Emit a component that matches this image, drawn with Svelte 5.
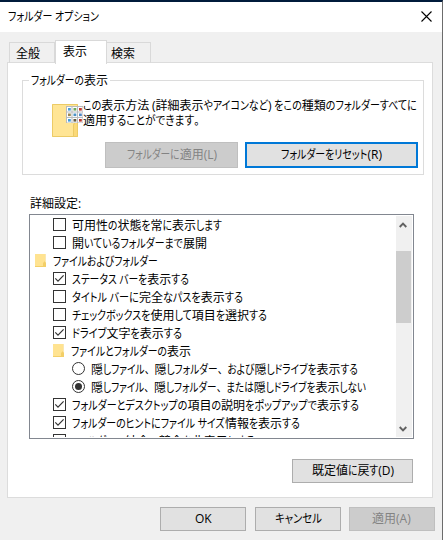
<script lang="ts">
  type Row = {
    kind: 'check' | 'radio' | 'folder';
    level: number;
    text: string;
    width: number;
    on?: boolean;
  };

  const tabs = [
    { text: '全般', width: 24 },
    { text: '表示', width: 24, active: true },
    { text: '検索', width: 24 },
  ];

  let rows: Row[] = $state([
    { kind: 'check', level: 1, text: '可用性の状態を常に表示します', width: 150 },
    { kind: 'check', level: 1, text: '開いているフォルダーまで展開', width: 135 },
    { kind: 'folder', level: 0, text: 'ファイルおよびフォルダー', width: 105 },
    { kind: 'check', level: 1, text: 'ステータス バーを表示する', width: 117, on: true },
    { kind: 'check', level: 1, text: 'タイトル バーに完全なパスを表示する', width: 171 },
    { kind: 'check', level: 1, text: 'チェックボックスを使用して項目を選択する', width: 195 },
    { kind: 'check', level: 1, text: 'ドライブ文字を表示する', width: 110, on: true },
    { kind: 'folder', level: 1, text: 'ファイルとフォルダーの表示', width: 120 },
    { kind: 'radio', level: 2, text: '隠しファイル、隠しフォルダー、および隠しドライブを表示する', width: 267 },
    { kind: 'radio', level: 2, text: '隠しファイル、隠しフォルダー、または隠しドライブを表示しない', width: 275, on: true },
    { kind: 'check', level: 1, text: 'フォルダーとデスクトップの項目の説明をポップアップで表示する', width: 287, on: true },
    { kind: 'check', level: 1, text: 'フォルダーのヒントにファイル サイズ情報を表示する', width: 228, on: true },
    { kind: 'check', level: 1, text: 'フォルダーの結合の競合を非表示にする', width: 183, on: true },
  ]);

  function toggle(row: Row) {
    if (row.kind === 'check') row.on = !row.on;
    if (row.kind === 'radio') {
      for (const r of rows) if (r.kind === 'radio') r.on = r === row;
    }
  }

  // kanji and latin keep their full width, kana and punctuation share what is left
  const split = (text: string) =>
    text.match(/[\u4e00-\u9fff]+|[!-~]+|[、。]|[^\u4e00-\u9fff!-~、。]+/g) ?? [];

  function fit(node: SVGSVGElement, width: number) {
    const runs = [...node.querySelectorAll('text')];
    const lengths = runs.map((r) => r.getComputedTextLength());
    const fixed = runs.map((r) => /[\u4e00-\u9fff!-~]/.test(r.textContent ?? ''));
    const sum = (keep: boolean) => lengths.reduce((t, l, i) => (fixed[i] === keep ? t + l : t), 0);
    const scale = (width - sum(true)) / (sum(false) || 1);
    let x = 0;
    runs.forEach((run, i) => {
      const s = fixed[i] ? 1 : scale;
      run.setAttribute('transform', `translate(${x} 0) scale(${s} 1)`);
      x += lengths[i] * s;
    });
  }
</script>

{#snippet label(text: string, width: number)}
  <svg class="label" {width} height="16" use:fit={width}>
    {#each split(text) as run}<text y="12" class:stop={/[、。]/.test(run)}>{run}</text>{/each}
  </svg>
{/snippet}

<div class="window">
  <header class="titlebar">
    {@render label('フォルダー オプション', 91)}
    <svg class="close" width="11" height="11" viewBox="0 0 11 11">
      <path d="M.5 .5l10 10M10.5 .5l-10 10" />
    </svg>
  </header>

  <nav class="tabs">
    {#each tabs as tab}
      <div class="tab" class:active={tab.active}>{@render label(tab.text, tab.width)}</div>
    {/each}
  </nav>

  <main class="page">
    <section class="group">
      <div class="legend">{@render label('フォルダーの表示', 77)}</div>
      <div class="info">
        <svg class="views" width="31" height="33" viewBox="0 0 31 33">
          <path fill="#ffe595" d="M0 0h26v33H0z" />
          <path fill="#fbd978" d="M22 19l4-2v16h-5V20z" />
          <path fill="none" stroke="#eccb66" d="M.5 .5h25v32H.5zM21.5 32V21l1-2" />
          <path fill="#b9bbbd" d="M14 2h17v17H14z" />
          {#each [0, 1, 2] as r}
            {#each [0, 1, 2] as c}
              <rect x={15 + c * 5.5} y={3 + r * 5.5} width="4.5" height="4.5" fill="#fff" />
              <rect
                x={16 + c * 5.5}
                y={4 + r * 5.5}
                width="2.8"
                height="2.6"
                fill={[['#4c9fd8', '#70a95b', '#c53d32'], ['#9b8852', '#4b91c4', '#5186c3'], ['#419ddb', '#655b3e', '#bb392e']][r][c]}
              />
            {/each}
          {/each}
        </svg>
        <div class="lines">
          {@render label('この表示方法 (詳細表示やアイコンなど) をこの種類のフォルダーすべてに', 334)}
          {@render label('適用することができます。', 122)}
        </div>
      </div>
      <div class="actions">
        <button class="apply-all" disabled>{@render label('フォルダーに適用(L)', 90)}</button>
        <button class="reset">{@render label('フォルダーをリセット(R)', 101)}</button>
      </div>
    </section>

    <div class="caption">{@render label('詳細設定:', 51)}</div>
    <div class="list">
      <div class="rows">
        {#each rows as row}
          <!-- svelte-ignore a11y_click_events_have_key_events, a11y_no_static_element_interactions -->
          <div class="row level{row.level} {row.kind}" onclick={() => toggle(row)}>
            {#if row.kind === 'check'}
              <svg class="mark" width="13" height="13" viewBox="0 0 13 13">
                <rect x=".5" y=".5" width="12" height="12" />
                {#if row.on}<path d="M2.3 6.3l2.7 2.8 5.6-5.8" />{/if}
              </svg>
            {:else if row.kind === 'radio'}
              <svg class="mark" width="13" height="13" viewBox="0 0 13 13">
                <circle cx="6.5" cy="6.5" r="6" />
                {#if row.on}<circle class="dot" cx="6.5" cy="6.5" r="3.5" />{/if}
              </svg>
            {:else}
              <svg width="11" height="13" viewBox="0 0 11 13">
                <path fill="#ffe391" d="M0 0h10v8l1 1v4H0z" />
                <path fill="#f3cf68" d="M0 12h8V9l2-2V0h.5v8l.5 1v4H0z" />
              </svg>
            {/if}
            {@render label(row.text, row.width)}
          </div>
        {/each}
      </div>
      <div class="scrollbar">
        <svg width="8" height="6" viewBox="0 0 8 6"><path d="M.7 5L4 1.7 7.3 5" /></svg>
        <div class="thumb"></div>
        <svg class="down" width="8" height="6" viewBox="0 0 8 6"><path d="M.7 1L4 4.3 7.3 1" /></svg>
      </div>
    </div>
    <button class="defaults">{@render label('既定値に戻す(D)', 82)}</button>
  </main>

  <footer>
    <button class="ok">{@render label('OK', 17)}</button>
    <button>{@render label('キャンセル', 47)}</button>
    <button disabled>{@render label('適用(A)', 40)}</button>
  </footer>
</div>

<style>
  :global(body) {
    margin: 0;
    overflow: hidden;
  }

  .window {
    box-sizing: border-box;
    width: 443px;
    height: 540px;
    display: flex;
    flex-direction: column;
    background: #f0f0f0;
    border-top: 2px solid #001b3b;
    border-right: 1px solid #6c6c6c;
    font: 12px 'Open Sans', 'Noto Sans CJK JP', sans-serif;
    color: #000;
  }

  svg {
    display: block;
    flex: none;
  }

  .label {
    overflow: visible;
    fill: currentColor;
    font-feature-settings: 'palt';
  }

  .label text {
    white-space: pre;
  }

  .label .stop {
    font-feature-settings: normal;
  }

  .titlebar {
    height: 30px;
    flex: none;
    box-sizing: border-box;
    padding: 0 10px 1px 8px;
    display: flex;
    align-items: center;
    justify-content: space-between;
    background: #fff;
  }

  .close {
    fill: none;
    stroke: #000;
    stroke-width: 1.1;
  }

  .tabs {
    display: flex;
    align-items: flex-end;
    height: 31px;
    flex: none;
    padding-left: 9px;
    z-index: 1;
  }

  .tab {
    box-sizing: border-box;
    width: 46px;
    height: 21px;
    padding: 3px 0 0 6px;
    border: 1px solid #d9d9d9;
    border-bottom: 0;
  }

  .tab.active {
    width: 52px;
    height: 24px;
    margin-bottom: -1px;
    padding-left: 7px;
    background: #fff;
  }

  .tab:last-child {
    width: 44px;
    padding-left: 4px;
    border-left: 0;
  }

  .page {
    box-sizing: border-box;
    flex: none;
    width: 426px;
    height: 436px;
    margin: -1px 0 0 7px;
    padding: 17px 7px 0 14px;
    border: 1px solid #dcdcdc;
    background: #fff;
    display: flex;
    flex-direction: column;
  }

  .group {
    box-sizing: border-box;
    width: 402px;
    height: 95px;
    border: 1px solid #dcdcdc;
    display: flex;
    flex-direction: column;
  }

  .legend {
    align-self: flex-start;
    margin: -8px 0 0 6px;
    padding: 0 2px;
    background: #fff;
  }

  .info {
    display: flex;
    margin: 9px 0 0 29px;
  }

  .views {
    margin-top: 6px;
  }

  .lines {
    display: flex;
    flex-direction: column;
  }

  .lines .label {
    height: 15px;
  }

  .actions {
    display: flex;
    gap: 7px;
    margin: 5px 0 0 82px;
  }

  button {
    box-sizing: border-box;
    width: 86px;
    height: 24px;
    padding: 0;
    display: flex;
    align-items: center;
    justify-content: center;
    background: #e1e1e1;
    border: 1px solid #adadad;
    font: inherit;
    color: #000;
  }

  button:disabled {
    background: #ccc;
    border-color: #bfbfbf;
    color: #838383;
  }

  .apply-all {
    width: 133px;
    height: 26px;
  }

  .reset {
    width: 173px;
    height: 26px;
    border: 2px solid #0078d7;
  }

  .caption {
    margin: 21px 0 0 8px;
  }

  .list {
    box-sizing: border-box;
    width: 385px;
    height: 225px;
    margin: 2px 0 0 7px;
    border: 1px solid #828790;
    padding: 1px;
    display: flex;
  }

  .rows {
    flex: 1;
    height: 221px;
    overflow: hidden;
  }

  .row {
    display: flex;
    align-items: flex-start;
    gap: 6px;
    height: 16px;
    padding-top: 2px;
  }

  .level0 {
    padding-left: 4px;
  }

  .level1 {
    padding-left: 22px;
  }

  .level2 {
    padding-left: 41px;
  }

  .row.folder {
    gap: 7px;
  }

  .mark {
    fill: #fff;
    stroke: #333;
  }

  .mark path {
    fill: none;
    stroke-width: 1.2;
  }

  .mark .dot {
    fill: #333;
    stroke: none;
  }

  .scrollbar {
    box-sizing: border-box;
    width: 16px;
    padding: 6px 1px 5px 0;
    display: flex;
    flex-direction: column;
    background: #f0f0f0;
  }

  .scrollbar svg {
    margin-left: 3px;
    fill: none;
    stroke: #606060;
    stroke-width: 1.9;
  }

  .thumb {
    height: 72px;
    margin-top: 23px;
    background: #cdcdcd;
  }

  .scrollbar .down {
    margin-top: auto;
  }

  .defaults {
    width: 121px;
    margin: 20px 0 0 270px;
  }

  footer {
    display: flex;
    gap: 8px;
    margin: 9px 7px 0 0;
    justify-content: flex-end;
  }

  .ok {
    margin-right: 1px;
  }
</style>
